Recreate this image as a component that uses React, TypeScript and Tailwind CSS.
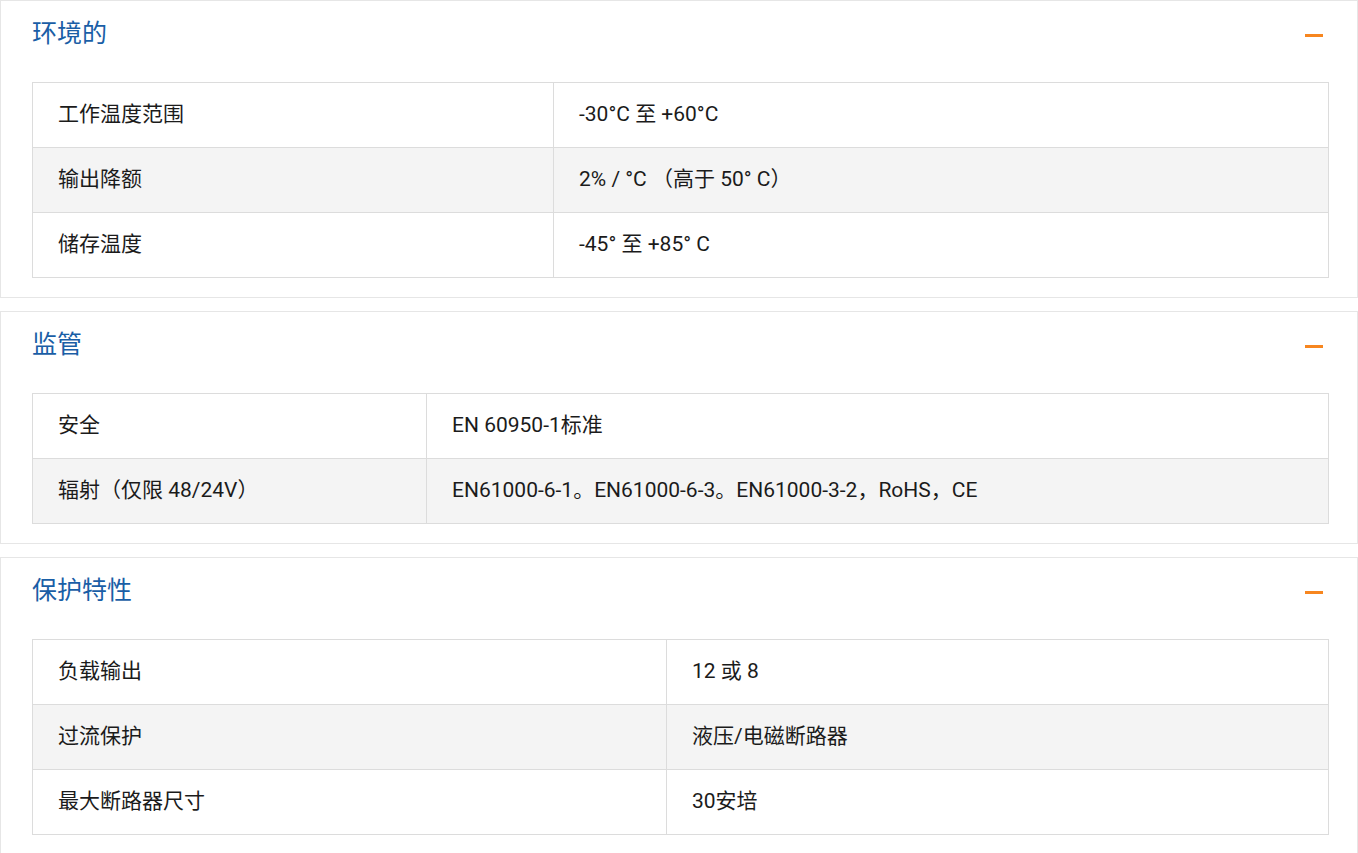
import { useState } from "react";

type Row = { label: string; value: string };

type Section = {
  title: string;
  labelWidth: string;
  rows: Row[];
};

const sections: Section[] = [
  {
    title: "环境的",
    labelWidth: "grid-cols-[521px_1fr]",
    rows: [
      { label: "工作温度范围", value: "-30°C 至 +60°C" },
      { label: "输出降额", value: "2% / °C （高于 50° C）" },
      { label: "储存温度", value: "-45° 至 +85° C" },
    ],
  },
  {
    title: "监管",
    labelWidth: "grid-cols-[394px_1fr]",
    rows: [
      { label: "安全", value: "EN 60950-1标准" },
      { label: "辐射（仅限 48/24V）", value: "EN61000-6-1。EN61000-6-3。EN61000-3-2，RoHS，CE" },
    ],
  },
  {
    title: "保护特性",
    labelWidth: "grid-cols-[634px_1fr]",
    rows: [
      { label: "负载输出", value: "12 或 8" },
      { label: "过流保护", value: "液压/电磁断路器" },
      { label: "最大断路器尺寸", value: "30安培" },
    ],
  },
];

function SpecPanel({ section }: { section: Section }) {
  const [open, setOpen] = useState(true);
  return (
    <section className="border border-[#e6e6e6] bg-white pl-[31px] pr-[28px] pb-[19px]">
      <button
        type="button"
        onClick={() => setOpen(!open)}
        className="flex w-full items-center justify-between pt-[18px] pb-[33px] text-left"
      >
        <h2 className="text-[25px] leading-[30px] text-[#1a5ea6]">{section.title}</h2>
        <span className="mr-[6px] mt-[2px] block h-[3px] w-[18px] bg-[#f7861f]" />
      </button>
      {open && (
        <div className="border border-[#dcdcdc]">
          {section.rows.map((row, i) => (
            <div
              key={row.label}
              className={`grid ${section.labelWidth} ${i > 0 ? "border-t border-[#dcdcdc]" : ""} ${
                i % 2 === 1 ? "bg-[#f4f4f4]" : "bg-white"
              }`}
            >
              <div className="flex h-[64px] items-center border-r border-[#dcdcdc] px-[25px]">{row.label}</div>
              <div className="flex h-[64px] items-center px-[25px]">{row.value}</div>
            </div>
          ))}
        </div>
      )}
    </section>
  );
}

export default function App() {
  return (
    <div
      className="flex w-[1358px] flex-col gap-[13px] bg-white text-[21px] text-[#1b1b1b]"
      style={{ fontFamily: 'Roboto, "Noto Sans CJK SC", sans-serif' }}
    >
      {sections.map((s) => (
        <SpecPanel key={s.title} section={s} />
      ))}
    </div>
  );
}
